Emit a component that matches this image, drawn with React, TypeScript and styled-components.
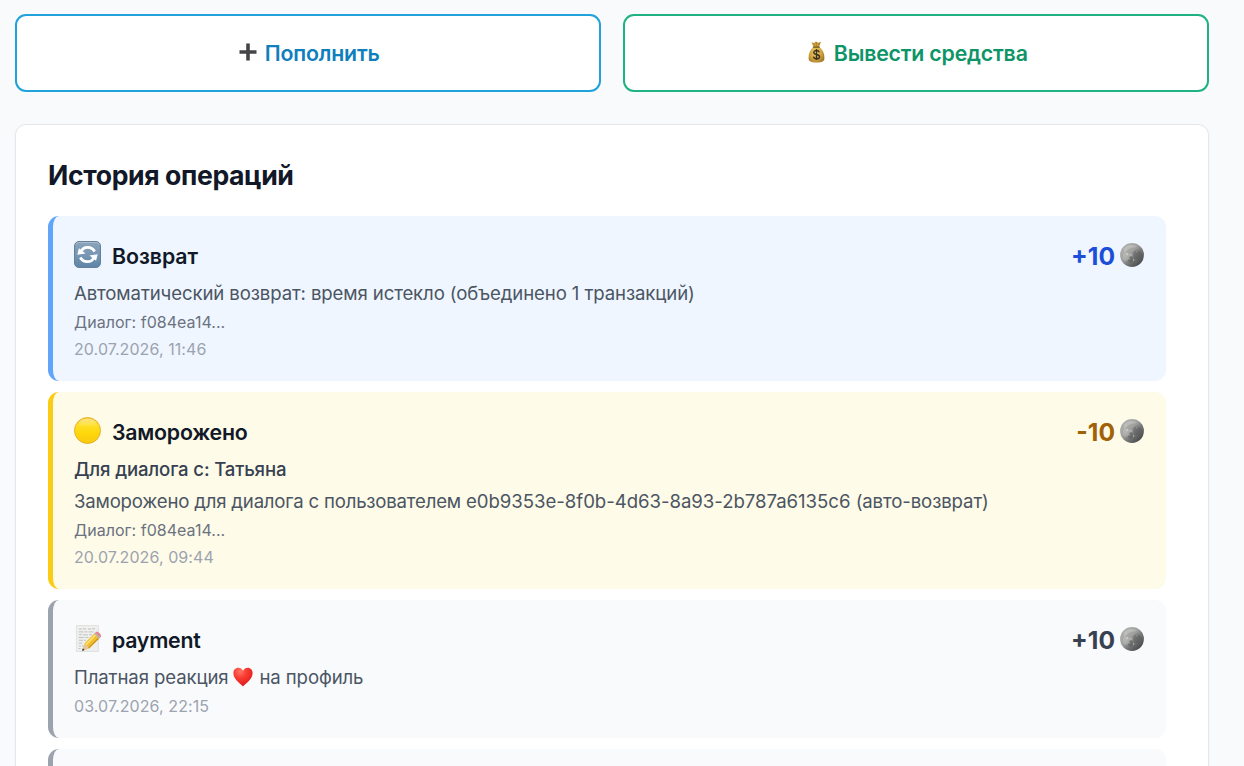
import React from "react";
import styled, { createGlobalStyle } from "styled-components";

const GlobalStyle = createGlobalStyle`
  * { box-sizing: border-box; }
  html, body { margin: 0; height: 100%; overflow: hidden; }
  body {
    background: #f9fafc;
    color: #111827;
    font-family: Inter, "Liberation Sans", sans-serif;
  }
`;

const Page = styled.main`
  height: 766px;
  overflow: hidden;
  padding: 14px 35px 0 15px;
`;

const Actions = styled.div`
  display: grid;
  grid-template-columns: 1fr 1fr;
  gap: 22px;
  margin-bottom: 32px;
`;

const ActionButton = styled.button<{ $border: string; $color: string }>`
  display: flex;
  align-items: center;
  justify-content: center;
  gap: 7.5px;
  height: 78px;
  padding: 0 0 0 3px;
  border: 2px solid ${(p) => p.$border};
  border-radius: 11px;
  background: #fff;
  color: ${(p) => p.$color};
  font: 600 21.3px/32px Inter, sans-serif;
  letter-spacing: -0.19px;
  white-space: nowrap;

  svg { display: block; flex: none; margin-top: -2px; }
`;

const Card = styled.section`
  height: 800px;
  padding: 32px 42px 0 32px;
  border: 1px solid #e5e7eb;
  border-radius: 11px;
  background: #fff;
  box-shadow: 0 1px 3px rgba(0, 0, 0, 0.04);
`;

const Heading = styled.h2`
  margin: 0 0 22px;
  font-size: 26.6px;
  font-weight: 700;
  line-height: 37px;
  letter-spacing: -0.38px;
`;

const List = styled.div`
  display: flex;
  flex-direction: column;
  gap: 11px;
`;

const Row = styled.article<{ $bg: string; $accent: string }>`
  min-height: 138px;
  padding: 21px;
  border-left: 5px solid ${(p) => p.$accent};
  border-radius: 11px;
  background: ${(p) => p.$bg};
`;

const RowHead = styled.header`
  display: flex;
  align-items: center;
  justify-content: space-between;
  height: 38px;
  margin-bottom: 4px;
`;

const TitleGroup = styled.div`
  display: flex;
  align-items: center;
  gap: 11px;

  svg { display: block; margin-top: -3px; }
`;

const Title = styled.span<{ $spacing: string }>`
  font-size: 21.3px;
  font-weight: 600;
  line-height: 38px;
  letter-spacing: ${(p) => p.$spacing};
`;

const Amount = styled.div<{ $color: string }>`
  display: flex;
  align-items: center;
  gap: 5px;
  margin-top: -2px;
  padding-right: 1px;
  color: ${(p) => p.$color};
  font-size: 24.6px;
  font-weight: 700;
  line-height: 34px;

  span { padding-top: 1px; }
  svg { display: block; }
`;

const Line = styled.p<{ $strong?: boolean }>`
  display: flex;
  align-items: center;
  margin: 0 0 4px;
  color: ${(p) => (p.$strong ? "#374151" : "#4b5563")};
  font-size: 18.6px;
  font-weight: ${(p) => (p.$strong ? 500 : 400)};
  line-height: 28px;
  letter-spacing: ${(p) => (p.$strong ? "-0.16px" : "-0.115px")};
  white-space: pre;

  svg { display: block; margin: 0 6px 0 5px; }
`;

const Narrow = styled.span`
  letter-spacing: -0.195px;
`;

const UserId = styled.span`
  letter-spacing: -0.035px;
`;

const Dialog = styled.p`
  margin: 0 0 4px;
  color: #6b7280;
  font-size: 16px;
  line-height: 23px;
  letter-spacing: 0.03px;
`;

const Time = styled.time`
  display: block;
  color: #9ca3af;
  font-size: 16px;
  line-height: 22px;
  letter-spacing: 0.08px;
`;

const PlusIcon = () => (
  <svg width="18" height="18" viewBox="0 0 18 18">
    <path d="M7.2 .5h3.6v6.7h6.7v3.6h-6.7v6.7H7.2v-6.7H.5V7.2h6.7z" fill="#454547" />
  </svg>
);

const MoneyBagIcon = () => (
  <svg width="19" height="22" viewBox="0 0 19 22">
    <defs>
      <radialGradient id="bag" cx=".45" cy=".5" r=".6">
        <stop offset="0" stopColor="#efd16e" />
        <stop offset=".65" stopColor="#cfa13b" />
        <stop offset="1" stopColor="#9c7428" />
      </radialGradient>
    </defs>
    <path d="M6.8 6 4.4 1.5 7 2 9 .5l2 1.3 3-.7L12 6c3.8 2.4 5.6 6.4 5.4 11.3-.1 3.3-2.5 4.2-7.9 4.2s-7.8-.9-7.9-4.2C1.4 12.4 3.1 8.4 6.8 6z" fill="url(#bag)" />
    <path d="m6.2 2.4 1.8 3.2M12.4 2 10.8 5.6M9.3 1.5v4" stroke="#98702a" strokeWidth=".7" />
    <path d="M6.3 6.1h6.1" stroke="#745019" strokeWidth="1.3" strokeLinecap="round" />
    <path d="M12.3 11.3c-.3-1.3-1.4-1.8-2.8-1.8-1.6 0-2.7.7-2.7 1.9 0 2.9 5.8 1.3 5.8 4.3 0 1.3-1.3 2.1-3 2.1s-2.9-.7-3.1-2.2M9.5 8.1v11" fill="none" stroke="#3c3221" strokeWidth="1.4" />
  </svg>
);

const RefreshIcon = () => (
  <svg width="27" height="27" viewBox="0 0 27 27">
    <defs>
      <linearGradient id="tile" x2="0" y2="1">
        <stop stopColor="#8ba4ba" />
        <stop offset=".5" stopColor="#7897b4" />
        <stop offset="1" stopColor="#5f84a7" />
      </linearGradient>
    </defs>
    <rect x=".5" y=".5" width="26" height="26" rx="4.5" fill="url(#tile)" stroke="#64809a" />
    <path d="M2 3.5Q2.5 1.5 5 1.5h17q2.5 0 3 2" fill="none" stroke="#b4c4d2" strokeWidth=".7" />
    <path d="M6.9 10.8C8.2 7.6 10.7 6.300 13.700 6.300c3.100 0 5.500 1.500 7 4.200M20.100 16.200c-1.300 3.200-3.800 4.500-6.800 4.500-3.100 0-5.500-1.500-7-4.200" fill="none" stroke="#fff" strokeWidth="2.7" />
    <path d="M4.9 7.3 3.3 13.7l8.3-1.2zM22.1 19.7l1.6-6.4-8.3 1.2z" fill="#fff" />
  </svg>
);

const YellowCircleIcon = () => (
  <svg width="27" height="27" viewBox="0 0 27 27">
    <defs>
      <linearGradient id="sun" x2="0" y2="1">
        <stop stopColor="#f5cc32" />
        <stop offset=".25" stopColor="#ffe02b" />
        <stop offset=".6" stopColor="#fdd80b" />
        <stop offset="1" stopColor="#f9c80c" />
      </linearGradient>
      <linearGradient id="shine" x2="0" y2="1">
        <stop stopColor="#fff" stopOpacity=".4" />
        <stop offset="1" stopColor="#fff" stopOpacity="0" />
      </linearGradient>
    </defs>
    <circle cx="13.5" cy="13.5" r="13" fill="url(#sun)" stroke="#e1ad2d" strokeWidth=".9" />
    <ellipse cx="13.5" cy="6" rx="8.5" ry="4.3" fill="url(#shine)" />
  </svg>
);

const MemoIcon = () => (
  <svg width="27" height="27" viewBox="0 0 27 27">
    <path d="M2.4.5h22v26h-22z" fill="#efefee" stroke="#dcdcdb" strokeWidth=".8" />
    <path d="M5 4h3m1-.2h3m2 .2h3m1-.2h3M4.500 6.900h5m1 0h3m1 0h5M5 9.700h3m1 .2h5m1-.2h3M4.500 12.500h6m1 0h3M5 15.300h4m1 0h2M4.500 18.100h4M5 20.900h2m1 0h2M4.500 23.500h2" fill="none" stroke="#b7b7b7" strokeWidth=".8" />
    <path d="M10.4 18.600 20.200 8.500 25.200 13.500 15.200 23.600z" fill="#f2bf2c" />
    <path d="m12 19.700 9.200-9.500" stroke="#ffe071" strokeWidth="1.7" />
    <path d="m14.500 23.100 9.900-9.700" stroke="#c78c1d" strokeWidth="1.2" />
    <path d="m10.400 18.600 4.800 5-7.200 2.300z" fill="#e7c694" />
    <path d="m8.900 23.300 1.700 1.600-2.600 1z" fill="#363330" />
    <path d="m20.200 8.500 1.100-1.100 5 5-1.100 1.100z" fill="#a9b0b1" />
    <path d="m21.300 7.400.5-.5c2-1.300 6.100 2.600 5 5l-.5.5z" fill="#e6818c" />
  </svg>
);

const HeartIcon = () => (
  <svg width="20" height="20" viewBox="0 0 20 20">
    <defs>
      <radialGradient id="heart" cx=".35" cy=".2" r=".85">
        <stop stopColor="#ff7467" />
        <stop offset=".4" stopColor="#fa3c32" />
        <stop offset="1" stopColor="#d9171c" />
      </radialGradient>
    </defs>
    <path d="M10 19.4C6.5 16.3.4 11.7.4 6.3.4 3.1 2.5.8 5.2.8 7.3.8 9 2 10 4c1-2 2.7-3.2 4.8-3.2 2.7 0 4.8 2.3 4.8 5.5 0 5.4-6.1 10-9.6 13.1z" fill="url(#heart)" />
  </svg>
);

const CoinIcon = () => (
  <svg width="24" height="24" viewBox="0 0 24 24">
    <defs>
      <linearGradient id="moon" x1=".1" y1=".15" x2=".85" y2=".9">
        <stop stopColor="#b0b0ae" />
        <stop offset=".4" stopColor="#a0a09f" />
        <stop offset=".65" stopColor="#737474" />
        <stop offset="1" stopColor="#484a4b" />
      </linearGradient>
    </defs>
    <circle cx="12" cy="12" r="11.9" fill="url(#moon)" />
    <path d="M4 5.500 8 2.500l5-.5 4 2-5 .5-4 2-4 4z" fill="#d2d2cf" opacity=".45" />
    <path d="m3 11 3-2 3 1 2 2-2 2-1 3-3 1-2-3z" fill="#d6d6d3" opacity=".3" />
    <path d="m13 9 3-2 4 1 2 4-2 3-3 1-3-1z" fill="#555757" opacity=".4" />
    <path d="m9 15 3-2 1 3-2 4-3-2z" fill="#565858" opacity=".45" />
    <path d="m6 11 1.500-1 .5 1.500-1 1zM10 12l2-1-.5 2zM8 16l1.500-1 .5 1.500zM13 16l1.500 1-1.500 1zM16 9l1-1 .5 1z" fill="#e2e2df" opacity=".65" />
  </svg>
);

const Coins = ({ value, color }: { value: string; color: string }) => (
  <Amount $color={color}>
    <span>{value}</span>
    <CoinIcon />
  </Amount>
);

export default function App() {
  return (
    <>
      <GlobalStyle />
      <Page>
        <Actions>
          <ActionButton $border="#22a2da" $color="#0f7fbd">
            <PlusIcon />
            <span>Пополнить</span>
          </ActionButton>
          <ActionButton $border="#20b282" $color="#0d9467">
            <MoneyBagIcon />
            <span>Вывести средства</span>
          </ActionButton>
        </Actions>
        <Card>
          <Heading>История операций</Heading>
          <List>
            <Row $bg="#eff6ff" $accent="#60a5fa">
              <RowHead>
                <TitleGroup>
                  <RefreshIcon />
                  <Title $spacing="-0.05px">Возврат</Title>
                </TitleGroup>
                <Coins value="+10" color="#1d4ed8" />
              </RowHead>
              <Line>Автоматический возврат: время истекло (объединено 1 транзакций)</Line>
              <Dialog>Диалог: f084ea14...</Dialog>
              <Time>20.07.2026, 11:46</Time>
            </Row>
            <Row $bg="#fefbe8" $accent="#facc15">
              <RowHead>
                <TitleGroup>
                  <YellowCircleIcon />
                  <Title $spacing="-0.22px">Заморожено</Title>
                </TitleGroup>
                <Coins value="-10" color="#a16207" />
              </RowHead>
              <Line $strong>Для диалога с: Татьяна</Line>
              <Line>
                <Narrow>{"Заморожено для диалога с пользователем "}</Narrow>
                <UserId>{"e0b9353e-8f0b-4d63-8a93-2b787a6135c6 "}</UserId>
                <span>(авто-возврат)</span>
              </Line>
              <Dialog>Диалог: f084ea14...</Dialog>
              <Time>20.07.2026, 09:44</Time>
            </Row>
            <Row $bg="#f9fafc" $accent="#9ca3af">
              <RowHead>
                <TitleGroup>
                  <MemoIcon />
                  <Title $spacing="-0.25px">payment</Title>
                </TitleGroup>
                <Coins value="+10" color="#374151" />
              </RowHead>
              <Line>
                <span>Платная реакция</span>
                <HeartIcon />
                <span>на профиль</span>
              </Line>
              <Time>03.07.2026, 22:15</Time>
            </Row>
            <Row $bg="#f9fafc" $accent="#9ca3af" />
          </List>
        </Card>
      </Page>
    </>
  );
}
